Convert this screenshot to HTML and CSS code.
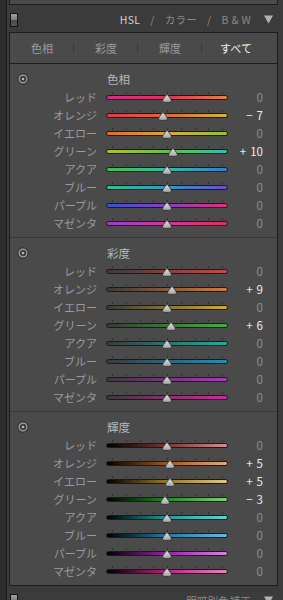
FILE: index.html
```html
<!DOCTYPE html>
<html lang="ja">
<head>
<meta charset="utf-8">
<link rel="stylesheet" href="styles.css">
</head>
<body>
<svg class="defs" width="0" height="0" aria-hidden="true">
  <defs>
    <linearGradient id="tg" x1="0" y1="0" x2="0" y2="1">
      <stop offset="0" stop-color="#e2e2e2"/>
      <stop offset="1" stop-color="#a2a2a2"/>
    </linearGradient>
    <symbol id="th" viewBox="0 0 10 9">
      <path d="M5 0.6 C5.7 0.6 6.3 1.9 7.3 3.1 C8.5 4.6 9.4 5.6 9.4 6.9 C9.4 8.1 8.4 8.4 5 8.4 C1.6 8.4 0.6 8.1 0.6 6.9 C0.6 5.6 1.5 4.6 2.7 3.1 C3.7 1.9 4.3 0.6 5 0.6 Z" fill="url(#tg)" stroke="#262626" stroke-width="0.8"/>
    </symbol>
    <symbol id="tgt" viewBox="0 0 12 12">
      <circle cx="6" cy="6" r="5.2" fill="#3c3c3c" stroke="#2a2a2a" stroke-width="0.8"/>
      <circle cx="6" cy="6" r="3.9" fill="none" stroke="#a4a4a4" stroke-width="1.2"/>
      <circle cx="6" cy="6" r="1.3" fill="#b4b4b4"/>
    </symbol>
  </defs>
</svg>
<div class="frame">
  <div class="edge"></div>
  <div class="col">
    <div class="stub"></div>
    <div class="hdr">
      <span class="switch"></span>
      <div class="hdr-title"><span class="on">HSL</span><span>/</span><span>カラー</span><span>/</span><span>B &amp; W</span></div>
      <svg class="tri" viewBox="0 0 9 9"><polygon points="0,0.5 9,0.5 4.5,8.5" fill="#b2b2b2"/></svg>
    </div>
    <div class="tabs">
      <span class="tab">色相</span>
      <span class="tab">彩度</span>
      <span class="tab">輝度</span>
      <span class="tab sel">すべて</span>
    </div>
    <div class="panel">
      <section class="sec">
        <div class="ttl"><svg class="target"><use href="#tgt"/></svg><span class="ttl-text">色相</span></div>
        <div class="row"><span class="lbl">レッド</span><div class="trk h1"><svg class="thumb" style="--v:0"><use href="#th"/></svg></div><span class="val">0</span></div>
        <div class="row"><span class="lbl">オレンジ</span><div class="trk h2"><svg class="thumb" style="--v:-7"><use href="#th"/></svg></div><span class="val nz"><span class="sg">−</span>7</span></div>
        <div class="row"><span class="lbl">イエロー</span><div class="trk h3"><svg class="thumb" style="--v:0"><use href="#th"/></svg></div><span class="val">0</span></div>
        <div class="row"><span class="lbl">グリーン</span><div class="trk h4"><svg class="thumb" style="--v:10"><use href="#th"/></svg></div><span class="val nz"><span class="sg">+</span>10</span></div>
        <div class="row"><span class="lbl">アクア</span><div class="trk h5"><svg class="thumb" style="--v:0"><use href="#th"/></svg></div><span class="val">0</span></div>
        <div class="row"><span class="lbl">ブルー</span><div class="trk h6"><svg class="thumb" style="--v:0"><use href="#th"/></svg></div><span class="val">0</span></div>
        <div class="row"><span class="lbl">パープル</span><div class="trk h7"><svg class="thumb" style="--v:0"><use href="#th"/></svg></div><span class="val">0</span></div>
        <div class="row"><span class="lbl">マゼンタ</span><div class="trk h8"><svg class="thumb" style="--v:0"><use href="#th"/></svg></div><span class="val">0</span></div>
      </section>
      <section class="sec">
        <div class="ttl"><svg class="target"><use href="#tgt"/></svg><span class="ttl-text">彩度</span></div>
        <div class="row"><span class="lbl">レッド</span><div class="trk s1"><svg class="thumb" style="--v:0"><use href="#th"/></svg></div><span class="val">0</span></div>
        <div class="row"><span class="lbl">オレンジ</span><div class="trk s2"><svg class="thumb" style="--v:9"><use href="#th"/></svg></div><span class="val nz"><span class="sg">+</span>9</span></div>
        <div class="row"><span class="lbl">イエロー</span><div class="trk s3"><svg class="thumb" style="--v:0"><use href="#th"/></svg></div><span class="val">0</span></div>
        <div class="row"><span class="lbl">グリーン</span><div class="trk s4"><svg class="thumb" style="--v:6"><use href="#th"/></svg></div><span class="val nz"><span class="sg">+</span>6</span></div>
        <div class="row"><span class="lbl">アクア</span><div class="trk s5"><svg class="thumb" style="--v:0"><use href="#th"/></svg></div><span class="val">0</span></div>
        <div class="row"><span class="lbl">ブルー</span><div class="trk s6"><svg class="thumb" style="--v:0"><use href="#th"/></svg></div><span class="val">0</span></div>
        <div class="row"><span class="lbl">パープル</span><div class="trk s7"><svg class="thumb" style="--v:0"><use href="#th"/></svg></div><span class="val">0</span></div>
        <div class="row"><span class="lbl">マゼンタ</span><div class="trk s8"><svg class="thumb" style="--v:0"><use href="#th"/></svg></div><span class="val">0</span></div>
      </section>
      <section class="sec">
        <div class="ttl"><svg class="target"><use href="#tgt"/></svg><span class="ttl-text">輝度</span></div>
        <div class="row"><span class="lbl">レッド</span><div class="trk l1"><svg class="thumb" style="--v:0"><use href="#th"/></svg></div><span class="val">0</span></div>
        <div class="row"><span class="lbl">オレンジ</span><div class="trk l2"><svg class="thumb" style="--v:5"><use href="#th"/></svg></div><span class="val nz"><span class="sg">+</span>5</span></div>
        <div class="row"><span class="lbl">イエロー</span><div class="trk l3"><svg class="thumb" style="--v:5"><use href="#th"/></svg></div><span class="val nz"><span class="sg">+</span>5</span></div>
        <div class="row"><span class="lbl">グリーン</span><div class="trk l4"><svg class="thumb" style="--v:-3"><use href="#th"/></svg></div><span class="val nz"><span class="sg">−</span>3</span></div>
        <div class="row"><span class="lbl">アクア</span><div class="trk l5"><svg class="thumb" style="--v:0"><use href="#th"/></svg></div><span class="val">0</span></div>
        <div class="row"><span class="lbl">ブルー</span><div class="trk l6"><svg class="thumb" style="--v:0"><use href="#th"/></svg></div><span class="val">0</span></div>
        <div class="row"><span class="lbl">パープル</span><div class="trk l7"><svg class="thumb" style="--v:0"><use href="#th"/></svg></div><span class="val">0</span></div>
        <div class="row"><span class="lbl">マゼンタ</span><div class="trk l8"><svg class="thumb" style="--v:0"><use href="#th"/></svg></div><span class="val">0</span></div>
      </section>
    </div>
    <div class="hdr">
      <span class="switch"></span>
      <div class="hdr-title"><span>明暗別色補正</span></div>
      <svg class="tri" viewBox="0 0 9 9"><polygon points="0,0.5 9,0.5 4.5,8.5" fill="#b2b2b2"/></svg>
    </div>
  </div>
</div>
</body>
</html>
```

FILE: styles.css
```css
* { box-sizing: border-box; margin: 0; padding: 0; }
html, body { background: #3b3b3b; }
body {
  width: 283px;
  height: 600px;
  overflow: hidden;
  font-family: "Noto Sans CJK JP", "Noto Sans", sans-serif;
}
.defs { position: absolute; width: 0; height: 0; }

.frame { display: flex; height: 600px; }
.edge { width: 7px; flex: none; background: #2c2c2c; border-right: 1px solid #1b1b1b; }
.col { flex: 1; min-width: 0; }

.stub {
  height: 5px;
  margin: 0 5px 0 2px;
  border: 1px solid #1d1d1d;
  border-top: none;
  background: #4a4a4a;
}

.hdr {
  height: 27px;
  display: flex;
  align-items: center;
  padding: 2px 10px 0 3px;
}
.switch {
  width: 8px;
  height: 14px;
  border: 1px solid #141414;
  background: linear-gradient(#a0a0a0, #7c7c7c 50%, #4c4c4c 50%, #545454);
}
.hdr-title {
  margin-left: auto;
  display: flex;
  gap: 10px;
  font-size: 10.5px;
  line-height: 14px;
  color: #8a8a8a;
  letter-spacing: 0.3px;
}
.hdr-title .on { color: #d2d2d2; }
.tri { margin-left: 13px; width: 9px; height: 9px; flex: none; }

.tabs {
  height: 31px;
  margin: 0 5px 0 2px;
  border: 1px solid #1d1d1d;
  border-bottom: none;
  background: #4a4a4a;
  display: grid;
  grid-template-columns: 64px 64px 64px 1fr;
  padding-right: 7px;
  align-items: center;
}
.tab {
  position: relative;
  text-align: center;
  font-size: 11px;
  line-height: 16px;
  color: #9c9c9c;
}
.tab + .tab::before {
  content: "";
  position: absolute;
  left: -1px;
  top: 50%;
  width: 1px;
  height: 10px;
  margin-top: -5px;
  background: #383838;
}
.tab.sel { color: #f2f2f2; }

.panel {
  margin: 0 5px 0 2px;
  border: 1px solid #1d1d1d;
  background: #4a4a4a;
}
.sec { padding: 6px 14px 5px 0; }
.sec + .sec { border-top: 1px solid #383838; }

.ttl, .row {
  display: grid;
  grid-template-columns: 96px 122px 1fr;
  align-items: center;
  height: 18px;
}
.target { width: 12px; height: 12px; margin-left: 7px; }
.ttl-text {
  padding-left: 1px;
  font-size: 11.5px;
  line-height: 18px;
  color: #b8b8b8;
}
.lbl {
  padding-right: 9px;
  text-align: right;
  font-size: 11px;
  line-height: 18px;
  color: #9a9a9a;
  white-space: nowrap;
}
.val {
  text-align: right;
  font-size: 11.5px;
  line-height: 18px;
  color: #8e8e8e;
  white-space: nowrap;
}
.val.nz { color: #ececec; }
.sg { margin-right: 4px; }

.trk {
  position: relative;
  height: 5px;
  border: 1px solid #1a1a1a;
  border-radius: 3px;
}
.trk::before {
  content: "";
  position: absolute;
  left: 5px;
  top: -4px;
  width: 111px;
  height: 2px;
  background: repeating-linear-gradient(90deg, #2e2e2e 0 1px, transparent 1px 13.75px);
}
.thumb {
  position: absolute;
  top: -2px;
  left: calc(50% - 5px + var(--v) * 0.6px);
  width: 10px;
  height: 9px;
}

/* hue */
.h1 { background: linear-gradient(90deg, #cf2f86, #e0305c 50%, #e3833c); }
.h2 { background: linear-gradient(90deg, #de3850, #e0683a 50%, #c9bb34); }
.h3 { background: linear-gradient(90deg, #df6a36, #d8a835 50%, #8fc23c); }
.h4 { background: linear-gradient(90deg, #b9bc2c, #62c048 50%, #2fbfae); }
.h5 { background: linear-gradient(90deg, #3ebf4c, #2fc0a8 50%, #2f7fd0); }
.h6 { background: linear-gradient(90deg, #2fc28e, #2f98c8 50%, #6a4fd2); }
.h7 { background: linear-gradient(90deg, #3554cc, #8a3ec6 50%, #e0307c); }
.h8 { background: linear-gradient(90deg, #9440d0, #d233a4 50%, #e03052); }

/* saturation */
.s1 { background: linear-gradient(90deg, #3a3a3a, #c84848); }
.s2 { background: linear-gradient(90deg, #3a3a3a, #d27a3c); }
.s3 { background: linear-gradient(90deg, #3a3a3a, #d0aa30); }
.s4 { background: linear-gradient(90deg, #3a3a3a, #3fb23f); }
.s5 { background: linear-gradient(90deg, #3a3a3a, #1fae9e); }
.s6 { background: linear-gradient(90deg, #3a3a3a, #2290b8); }
.s7 { background: linear-gradient(90deg, #3a3a3a, #b035c0); }
.s8 { background: linear-gradient(90deg, #3a3a3a, #d428a0); }

/* luminance */
.l1 { background: linear-gradient(90deg, #000, #7a3434 50%, #d88e8e); }
.l2 { background: linear-gradient(90deg, #000, #a45520 50%, #e6a676); }
.l3 { background: linear-gradient(90deg, #000, #9a7a28 50%, #e2c486); }
.l4 { background: linear-gradient(90deg, #000, #1f8a22 50%, #7ed070); }
.l5 { background: linear-gradient(90deg, #000, #1f9e9e 50%, #5fd3d3); }
.l6 { background: linear-gradient(90deg, #000, #1f7ea6 50%, #62b9e2); }
.l7 { background: linear-gradient(90deg, #000, #9c1fae 50%, #d882e4); }
.l8 { background: linear-gradient(90deg, #000, #c01f84 50%, #e884c0); }
```
